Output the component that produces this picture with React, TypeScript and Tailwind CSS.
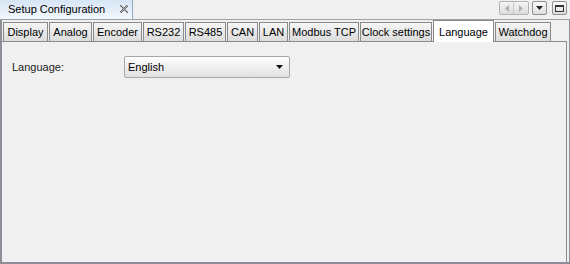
import React from "react";

const tabs: { label: string; w: string; sel?: boolean }[] = [
  { label: "Display", w: "w-[45px]" },
  { label: "Analog", w: "w-[43px]" },
  { label: "Encoder", w: "w-[49px]" },
  { label: "RS232", w: "w-[41px]" },
  { label: "RS485", w: "w-[41px]" },
  { label: "CAN", w: "w-[31px]" },
  { label: "LAN", w: "w-[29px]" },
  { label: "Modbus TCP", w: "w-[70px]" },
  { label: "Clock settings", w: "w-[72px]" },
  { label: "Language", w: "w-[61px]", sel: true },
  { label: "Watchdog", w: "w-[56px]" },
];

const closePix: [number, number, string][] = [];
for (let y = 0; y < 8; y++) {
  for (let x = 0; x < 8; x++) {
    const onDiag = x === y || x === 7 - y || x === y + 1 || x + 1 === y || x === 6 - y || x === 8 - y;
    if (onDiag) {
      const dark = (x + y) % 2 === 0;
      closePix.push([x, y, dark ? "#6a6a6a" : "#b8b8b8"]);
    }
  }
}

export default function App() {
  return (
    <div
      className="w-[570px] h-[264px] bg-[#f0f0f0] flex flex-col text-[11px] text-black overflow-hidden"
      style={{ fontFamily: '"Liberation Sans", Arial, sans-serif' }}
    >
      {/* view header */}
      <div className="h-[20px] flex border-b border-[#a0a0a8] shrink-0">
        <div className="w-[133px] h-[19px] flex items-center pl-[8px] bg-gradient-to-b from-[#d6e5f5] to-[#f4f8fc] border-r border-[#8fa9c9] relative">
          <span>Setup Configuration</span>
          <svg className="absolute left-[120px] top-[5px]" width="8" height="8" viewBox="0 0 8 8" shapeRendering="crispEdges">
            {closePix.map(([x, y, c]) => (
              <rect key={`${x}-${y}`} x={x} y={y} width="1" height="1" fill={c} />
            ))}
          </svg>
        </div>
        <div className="flex-1" />
        <div className="flex items-start pt-[1px] pr-[3px]">
          <div className="flex h-[14px] border border-[#b4b4b4] rounded-[2px] bg-gradient-to-b from-[#f4f4f4] to-[#dcdcdc]">
            <div className="w-[14px] flex items-center justify-center border-r border-[#c8c8c8]">
              <svg width="4" height="7" viewBox="0 0 4 7">
                <path d="M4 0 L0 3.5 L4 7 Z" fill="#b0b0b0" />
              </svg>
            </div>
            <div className="w-[14px] flex items-center justify-center">
              <svg width="4" height="7" viewBox="0 0 4 7">
                <path d="M0 0 L4 3.5 L0 7 Z" fill="#b0b0b0" />
              </svg>
            </div>
          </div>
          <div className="ml-[3px] w-[15px] h-[14px] flex items-center justify-center border border-[#8f8f8f] rounded-[2px] bg-gradient-to-b from-[#fafafa] to-[#dedede]">
            <svg width="7" height="4" viewBox="0 0 7 4">
              <path d="M0 0 L7 0 L3.5 4 Z" fill="#222" />
            </svg>
          </div>
          <div className="ml-[5px] w-[15px] h-[14px] flex items-center justify-center border border-[#8f8f8f] rounded-[2px] bg-gradient-to-b from-[#fafafa] to-[#dedede]">
            <div className="w-[9px] h-[7px] border border-[#333] border-t-[2px]" />
          </div>
        </div>
      </div>

      {/* body */}
      <div className="flex-1 flex flex-col border-l-2 border-r border-b-2 border-[#8e8e96] pr-[2px] min-h-0">
        <div className="h-[21px] flex items-end pl-[1px] gap-[1px] shrink-0">
          {tabs.map((t) =>
            t.sel ? (
              <div
                key={t.label}
                className={`${t.w} h-[22px] -mb-px bg-white border border-b-0 border-[#8a8a8a] flex items-start justify-center pt-[3px] relative z-10`}
              >
                {t.label}
              </div>
            ) : (
              <div
                key={t.label}
                className={`${t.w} h-[19px] bg-gradient-to-b from-[#f6f6f6] to-[#dcdcdc] border border-b-0 border-[#8a8a8a] flex items-center justify-center pt-[1px]`}
              >
                {t.label}
              </div>
            )
          )}
        </div>
        <div className="flex-1 border-t border-r border-[#8a8a8a] bg-[#f0f0f0] pt-[14px] pl-[10px]">
          <div className="flex items-center">
            <span className="w-[112px] text-[#1e1e1e]">Language:</span>
            <div className="w-[166px] h-[22px] border border-[#a7a7a7] rounded-[2px] bg-gradient-to-b from-[#fdfdfd] to-[#e2e2e2] flex items-center pl-[3px] pr-[6px]">
              <span className="flex-1 text-black">English</span>
              <svg width="7" height="4" viewBox="0 0 7 4">
                <path d="M0 0 L7 0 L3.5 4 Z" fill="#111" />
              </svg>
            </div>
          </div>
        </div>
      </div>
    </div>
  );
}
